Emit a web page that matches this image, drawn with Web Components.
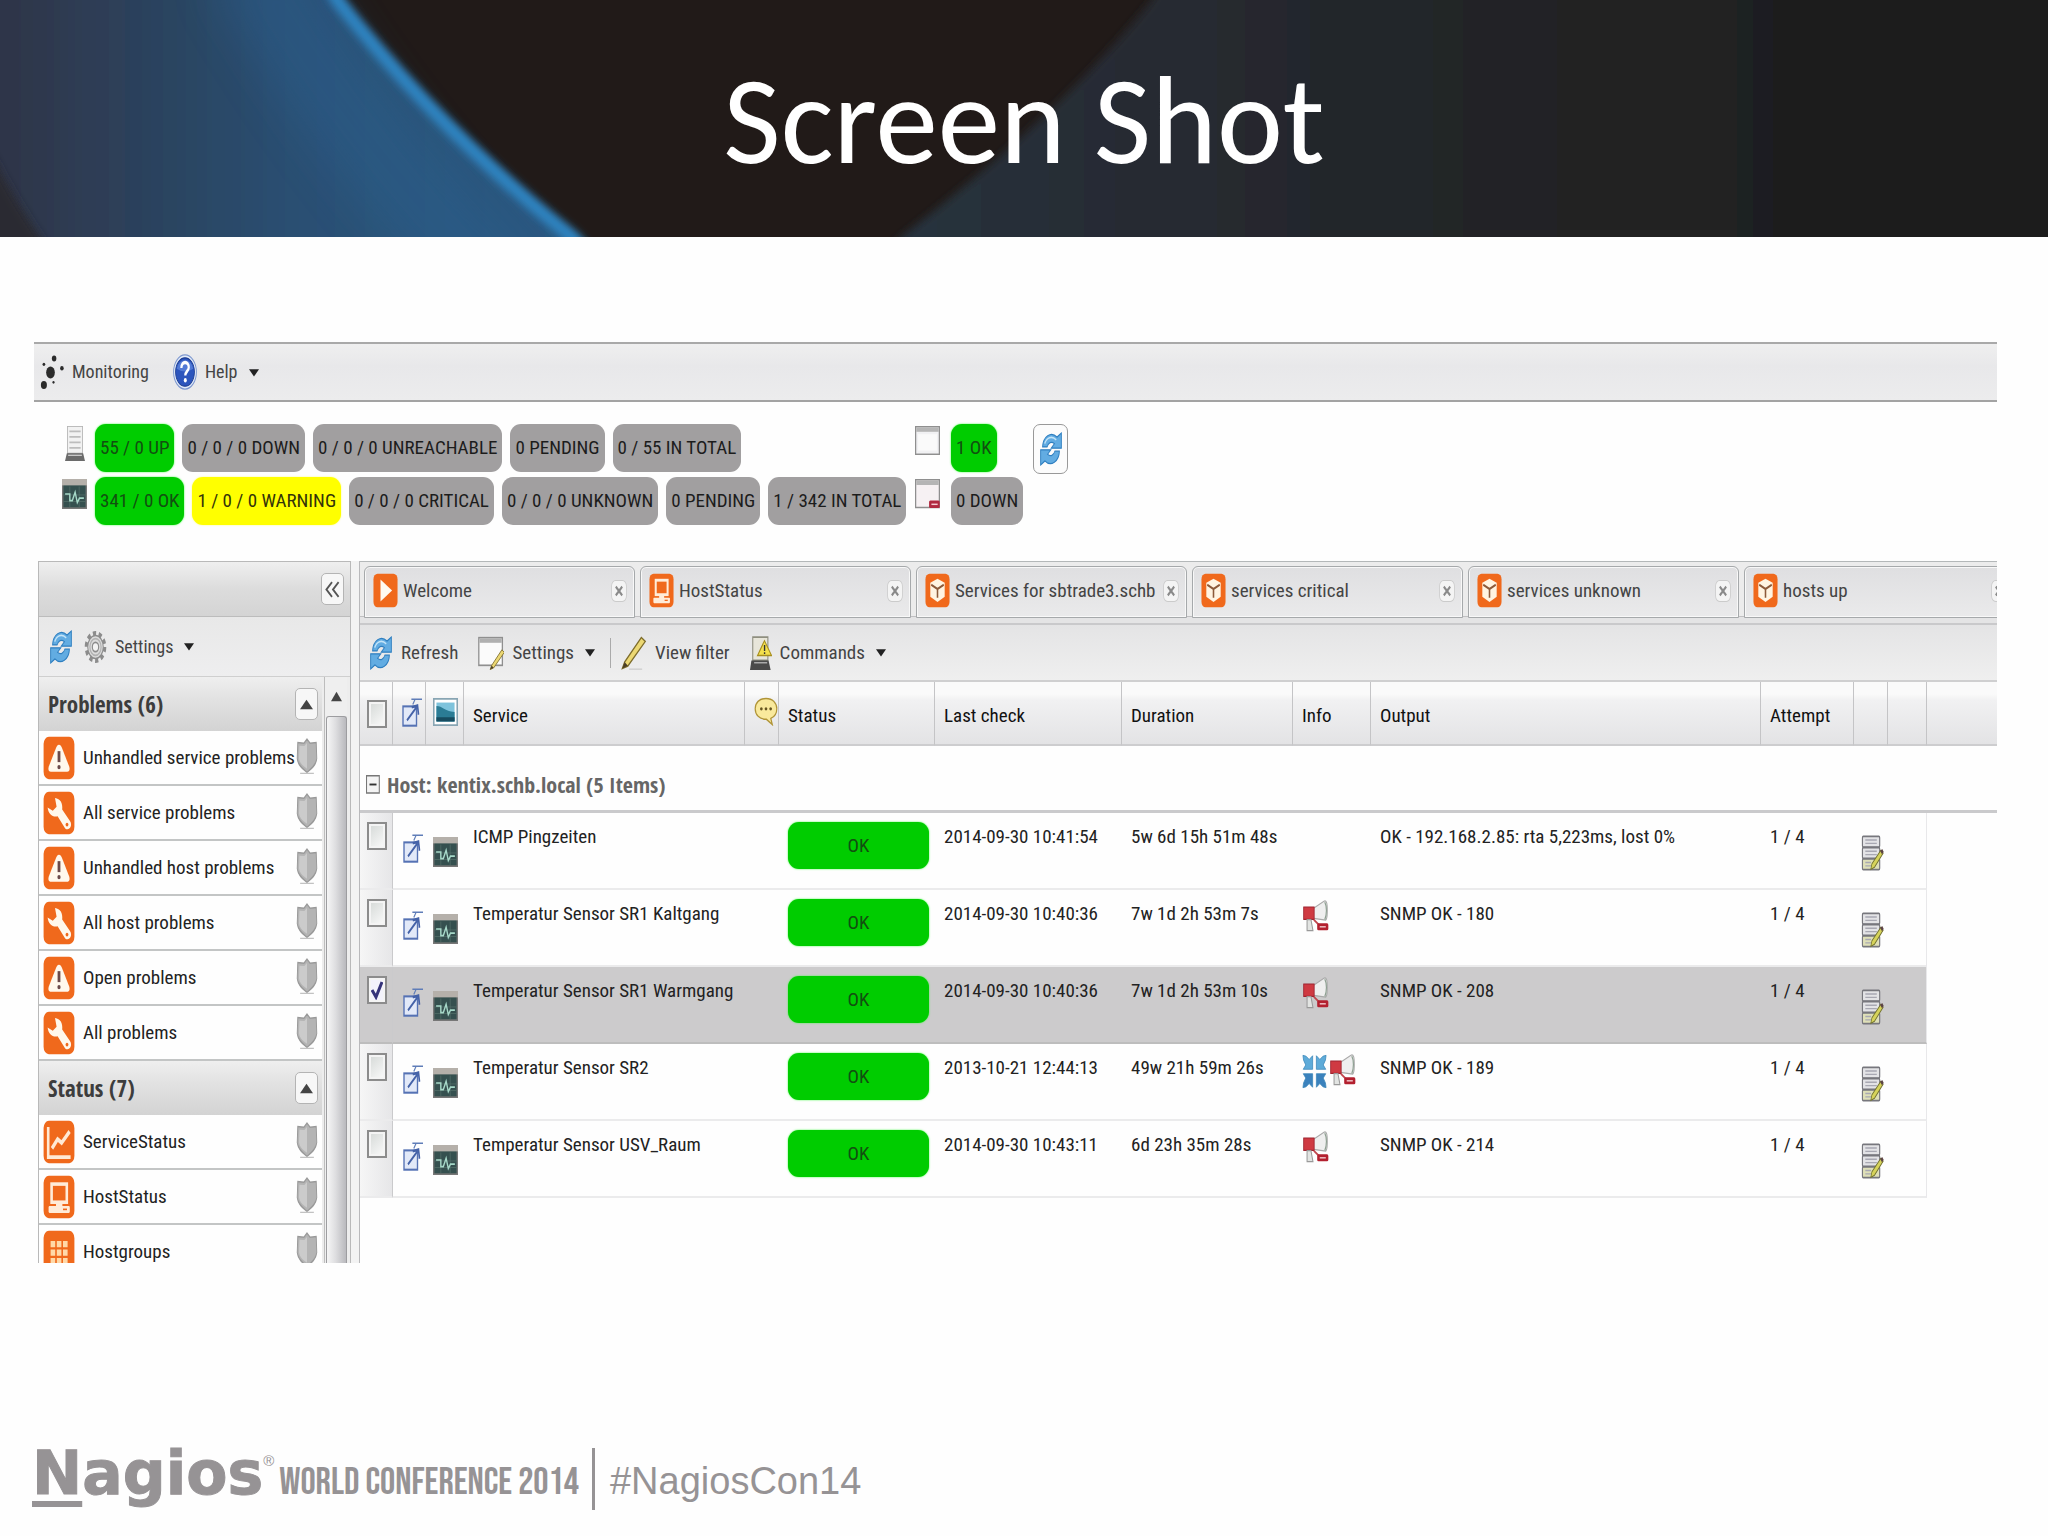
<!DOCTYPE html>
<html lang="en">
<head>
<meta charset="utf-8">
<title>Screen Shot</title>
<style>
  html, body { margin: 0; }
  body {
    min-height: 100vh; display: flex; flex-direction: column; background: #fefefe;
    font-family: "Roboto Condensed", "Liberation Sans", sans-serif; font-size: 19px; line-height: 24px; color: #222;
  }
  monitor-app { margin: 105px 51px 0 34px; }
  slide-footer { margin-top: auto; }
</style>
</head>
<body>
<slide-banner>Screen Shot</slide-banner>
<monitor-app></monitor-app>
<slide-footer></slide-footer>

<script>
const define = (name, html, init) => {
  const template = document.createElement('template');
  template.innerHTML = html;
  customElements.define(name, class extends HTMLElement {
    constructor() {
      super();
      this.attachShadow({ mode: 'open' }).append(template.content.cloneNode(true));
    }
    connectedCallback() { if (init) init(this, this.shadowRoot); }
  });
};

/* Icons: [width, height, drawing on a 16 x 16 grid] */
const tile = '<rect x=".3" y=".3" width="15.4" height="15.4" rx="2.6" fill="#f0691c"/>';
const screenIcon = '<rect x=".4" y=".4" width="15.2" height="15.2" fill="#35504f" stroke="#777"/><rect x="0" y="0" width="16" height="3.4" fill="#b5b0aa"/><path d="M1 8.5h14M1 12h14M5 4v11M11 4v11" stroke="#56716c" stroke-width=".4"/><path d="M2 8h3v3.5h1.6L8.4 7l1.4 5.6 1.4-2.4H14" fill="none" stroke="#a6d8c8" stroke-width=".9"/>';
const pencil = '<path d="M0 0L1.2-2.6 9.6-12.4 11.6-10.8 2.8-1z" fill="#ecd873" stroke="#7d6c2b" stroke-width=".6"/><path d="M0 0l1.2-2.6 1.6 1.5z" fill="#4b3f26"/>';
const ICONS = {
  network: [24, 36, '<g fill="#2b2b2b"><ellipse cx="7" cy="8.2" rx="2.9" ry="2.7"/><ellipse cx="2.600" cy="13.800" rx="2" ry="1.800"/><ellipse cx="9.400" cy="2" rx="1.500" ry="1.300"/><ellipse cx="14.600" cy="6.300" rx="1.200" ry="1"/><ellipse cx="2.600" cy="4.600" rx=".9" ry=".7"/><ellipse cx="9" cy="12.600" rx=".7" ry=".6"/></g>'],
  help: [24, 36, '<circle cx="8" cy="8" r="7.6" fill="#e4ecf8" stroke="#7d97cf" stroke-width=".6"/><circle cx="8" cy="8" r="6.3" fill="#2c55bd" stroke="#1c3c92" stroke-width=".5"/><path d="M2.5 6.5a5.6 4.6 0 0 1 11 0q-5.500 2.500-11 0z" fill="#6d93e4" opacity=".6"/><path d="M5.600 6.200c0-3.200 5-3.200 4.900-.2-.1 1.700-2.300 1.800-2.300 3.500" fill="none" stroke="#fff" stroke-width="1.500"/><circle cx="8.200" cy="11.700" r="1" fill="#fff"/>'],
  server: [20, 35, '<path d="M2 0h12v12.500H2z" fill="#f2f2f2" stroke="#aaa" stroke-width=".6"/><path d="M3.500 2.500h9M3.500 5h9M3.500 7.500h9M3.500 10h9" stroke="#bdbdbd" stroke-width=".8"/><path d="M1.500 12.500h13L16 16H0z" fill="#6b6b6b"/><path d="M2.500 13.400h11" stroke="#ccc" stroke-width=".6"/>'],
  screen: [25, 30, screenIcon],
  window: [25, 29, '<rect x=".4" y=".4" width="15.2" height="15.2" fill="#f1f1f3" stroke="#8f8f8f" stroke-width=".8"/><rect x=".8" y=".8" width="14.400" height="2.400" fill="#b5b5b5"/><rect x="2" y="4.500" width="12" height="9" fill="#fafafa"/>'],
  windowdown: [25, 30, '<rect x=".4" y=".4" width="15.2" height="14.800" fill="#f6f1f3" stroke="#8f8f8f" stroke-width=".8"/><rect x=".8" y=".8" width="14.400" height="2.400" fill="#b5b5b5"/><rect x="9" y="11.500" width="6.800" height="4" rx=".8" fill="#b02940"/><path d="M10.500 13.500h4" stroke="#f3c8d0" stroke-width=".8"/>'],
  refresh: [24, 34, '<g fill="#62ace2" stroke="#2f7fc0" stroke-width=".6"><path d="M2.400 7C2.600 2.200 8 -.6 12 2.400L14.900.5V7.600H8.200L10.300 5.500C8.300 4.200 6.200 5 5.400 7z"/><path d="M13.600 9C13.400 13.800 8 16.600 4 13.600L1.100 15.500V8.400H7.800L5.700 10.500C7.700 11.800 9.800 11 10.600 9z"/></g><path d="M3.800 5.500C5 2.600 8.500 1.500 11.500 3.700" fill="none" stroke="#c4e4f8" stroke-width=".8"/>'],
  gear: [23, 34, '<circle cx="8" cy="8" r="6.300" fill="none" stroke="#8c8c8c" stroke-width="2.400" stroke-dasharray="2.200 1.760"/><circle cx="8" cy="8" r="5.400" fill="#dcdcdc" stroke="#8c8c8c" stroke-width=".7"/><circle cx="8" cy="8" r="2.200" fill="#f3f3f3" stroke="#8c8c8c" stroke-width=".8"/><circle cx="8" cy="8" r="3.900" fill="none" stroke="#b2b2b2" stroke-width=".8"/>'],
  warn: [32, 44, tile + '<path d="M8 3.200c.8 0 1.100.5 1.500 1.200l3.600 6.700c.5 1.200 0 1.900-1 1.900H3.900c-1 0-1.500-.7-1-1.900l3.600-6.700C6.900 3.700 7.200 3.200 8 3.200z" fill="#fff8ec"/><path d="M8 5.500v4" stroke="#6b4a4a" stroke-width="1.400"/><circle cx="8" cy="11.300" r=".8" fill="#6b4a4a"/>'],
  wrench: [32, 44, tile + '<path d="M6 2.500c2.600.2 4 1.900 3.600 4.200l4.200 4.600c.9 1.800-1 3.300-2.700 2.300L7.300 9.200C5 9.700 2.700 8.500 2.300 6l2.600 1.200 1.900-1.500z" fill="#fff8ec"/><circle cx="12" cy="12.200" r=".7" fill="#f0691c"/>'],
  chart: [32, 44, tile + '<path d="M2.600 2.500v11h11.200" fill="none" stroke="#ffe9d4" stroke-width="1.300"/><path d="M4.500 10.300L7.300 7l2 1.300L13.300 4.200" fill="none" stroke="#ffe9d4" stroke-width="1.500"/>'],
  host: [32, 44, tile + '<rect x="4.300" y="3.300" width="7.600" height="6.600" fill="none" stroke="#ffecd9" stroke-width="1.300"/><path d="M6.500 10v1.600h3.200V10" fill="#ffecd9"/><rect x="2.800" y="11.300" width="10.600" height="2.500" rx=".5" fill="#ffecd9"/><path d="M10 12.500h2" stroke="#f0691c" stroke-width=".6"/>'],
  grid: [32, 44, tile + '<g fill="#ffd9a8"><path d="M3.800 4h2.300v2.300H3.800zM6.900 4h2.300v2.300H6.900zM10 4h2.300v2.300H10zM3.800 7.100h2.300v2.300H3.800zM6.900 7.100h2.300v2.300H6.900zM10 7.100h2.300v2.300H10zM3.800 10.200h2.300v2.300H3.800zM6.900 10.200h2.300v2.300H6.900zM10 10.200h2.300v2.300H10z"/></g>'],
  play: [25, 35, tile + '<path d="M4.800 3l7.400 5-7.400 5z" fill="#fffaf2"/>'],
  box: [25, 35, tile + '<path d="M8 2.600l4.600 1.900v6.300L8 13.200 3.400 10.800V4.500z" fill="#fff4e2"/><path d="M4 5.400L8 7.300l4-1.900M8 7.300v4" fill="none" stroke="#8c5a3a" stroke-width="1"/>'],
  shield: [22, 36, '<path d="M8 .5l2.200 1.800 4.500-.3.400 7.200C14.600 12.300 10.500 14 8 15.300 5.500 14 1.400 12.300.9 9.200L1.300 2l4.500.3z" fill="#b4b4b4" stroke="#999" stroke-width=".7"/><path d="M8 2.200v11.500C5.500 12.500 2.600 11.300 2.200 9l.3-5.600 3.600.1z" fill="#cbcbcb"/><path d="M3 15.700h10" stroke="#bbb" stroke-width=".5"/>'],
  link: [20, 30, '<rect x=".8" y="5" width="10.800" height="10.300" fill="#e2e9f8" stroke="#5572b4" stroke-width="1.100"/><path d="M4 12.500L11.500 5.500M7.800 5.500l4.600-1 .8 5" fill="none" stroke="#4462a8" stroke-width="1.300"/><path d="M7.500 1.200H16M10.500 1.200L8.600 4" fill="none" stroke="#5f7db8" stroke-width=".8"/>'],
  picture: [25, 28, '<rect x=".5" y=".5" width="15" height="15" fill="#fff" stroke="#88a5b3"/><rect x="2.200" y="2.600" width="11.600" height="10.800" fill="#7ec3dc"/><path d="M2.200 4.500c4 0 5 3 11.600 3.500v5.400H2.200z" fill="#2b7c95"/><path d="M2.200 11h11.600v2.400H2.200z" fill="#174c60"/>'],
  bubble: [24, 29, '<path d="M8 .8c4.500 0 7.200 2.500 7.200 5.700 0 2.600-1.600 4.500-4 5.300l1 3.400-3.900-2.900C3.500 12.300.8 9.800.8 6.500.8 3.200 3.500.8 8 .8z" fill="#f9e99c" stroke="#b09437" stroke-width=".8"/><g fill="#66551f"><circle cx="4.900" cy="6.500" r=".9"/><circle cx="8" cy="6.500" r=".9"/><circle cx="11.100" cy="6.500" r=".9"/></g>'],
  windowedit: [26, 34, '<rect x=".5" y=".8" width="14.500" height="13" fill="#fbfbfb" stroke="#8f8f8f" stroke-width=".8"/><rect x=".9" y="1.200" width="13.700" height="2" fill="#b0b0b0"/><g transform="translate(7.500 15.800) scale(.75)">' + pencil + '</g>'],
  pencil: [26, 34, '<g transform="translate(.8 15.300) scale(1.220 1.180)">' + pencil + '</g><path d="M5 15.600h8" stroke="#ccc" stroke-width=".6"/>'],
  command: [22, 34, '<path d="M2 .5h11v11H2z" fill="#e8e6da" stroke="#8f8f80" stroke-width=".8"/><path d="M1 11.500h12.500L15 16H0z" fill="#4a4a4a"/><path d="M3 12.600h9.500" stroke="#bbb" stroke-width=".6"/><path d="M10.500 2.200L15.700 9.200H5.500z" fill="#f4e04d" stroke="#a88f1e" stroke-width=".7"/><path d="M10.600 4.200v2.800M10.600 7.600v.9" stroke="#333" stroke-width="1"/>'],
  horn: [27, 33, '<path d="M6 4.500L13 .6c1.500-.6 2 .8 2 4.500s-.6 5.300-2 4.500L6 8.800z" fill="#efefef" stroke="#a9a9a9" stroke-width=".6"/><path d="M13.500 1c1.300 2 1.300 6 0 8.500" fill="none" stroke="#8ea092" stroke-width=".7"/><path d="M1 3.400h6.200v6H1z" fill="#cf3a42" stroke="#9e2430" stroke-width=".5"/><path d="M3 9.500v5.300h3.500L5.300 9.500z" fill="#e2e4e2" stroke="#999" stroke-width=".6"/><path d="M7 9.600l3 2.400" stroke="#c0474e" stroke-width="1"/><rect x="9" y="11.300" width="6.600" height="3.400" rx=".8" fill="#b3202f"/><path d="M10.500 13h3.600" stroke="#f0c5c9" stroke-width=".7"/>'],
  shrink: [25, 35, '<g fill="#5eabd9" stroke="#3a86b8" stroke-width=".4"><path d="M.6.6l2 .4 2 1.500L6.800.8V7H.8l1.600-2L1 2.800zM15.400.6l-2 .4-2 1.500L9.200.8V7h6l-1.600-2L15 2.800z"/><path d="M.6 15.400l2-.4 2-1.500 2.200 1.700V9H.8l1.600 2L1 13.200zM15.400 15.400l-2-.4-2-1.500-2.200 1.700V9h6l-1.600 2 1.400 2.200z" fill="#3b82bd"/></g>'],
  serveredit: [23, 36, '<g fill="#e3e3e6" stroke="#77777d" stroke-width=".8"><rect x="1" y=".6" width="12" height="4.800" rx=".6"/><rect x="1" y="5.600" width="12" height="4.800" rx=".6"/><rect x="1" y="10.600" width="12" height="4.800" rx=".6" fill="#dfe0b8"/></g><path d="M3 2.200h8M3 3.700h8M3 7.200h8M3 8.700h8M3 12.200h4M3 13.700h4" stroke="#a8a8b2" stroke-width=".6"/><path d="M6.800 15.300l.8-2.500 6.200-6 1.600 1.300-6 6.200z" fill="#d6d35a" stroke="#70702e" stroke-width=".5"/><path d="M13.300 7l1.500-.8 1 1.300-1.200 1.100z" fill="#5c4444"/>'],
  close: [16, 22, '<rect x=".6" y=".4" width="14.800" height="15.200" rx="4" fill="#f4f4f4" stroke="#cbcbcb" stroke-width=".8"/><path d="M4.800 4.800l6.400 6.400M11.200 4.800l-6.400 6.400" stroke="#8a8a8a" stroke-width="2"/>'],
  caret: [10, 9, '<path d="M0 2h16L8 15z" fill="#222"/>'],
  up: [13, 11, '<path d="M8 1l8 14H0z" fill="#444"/>'],
  rewind: [15, 17, '<path d="M7.500 1L1.500 8l6 7M14.500 1l-6 7 6 7" fill="none" stroke="#555" stroke-width="1.900"/>'],
  minus: [14, 19, '<path d="M.6.6h14.600v14.600H.6z" fill="#f4f4f4" stroke="#777" stroke-width="1.200"/><path d="M4 8h8" stroke="#333" stroke-width="1.600"/>']
};

define('ui-icon', `<style>:host { display: block; flex: none; } svg { display: block; }</style>`, (host, root) => {
  const [w, h, art] = ICONS[host.getAttribute('name')];
  const width = host.getAttribute('w') || w, height = host.getAttribute('h') || h;
  const box = document.createElement('div');
  box.innerHTML = `<svg width="${width}" height="${height}" viewBox="0 0 16 16" preserveAspectRatio="none" aria-hidden="true">${art}</svg>`;
  root.append(box.firstChild);
});

define('slide-banner', `
<style>
  :host { display: grid; height: 237px; overflow: hidden; background: #211a18; }
  svg, h1 { grid-area: 1 / 1; width: 100%; }
  svg { height: 237px; display: block; }
  h1 { margin: 0; padding-top: 4px; align-self: center; z-index: 1; text-align: center; color: #fff; font: 400 125px/150px Carlito, Lato, sans-serif; }
</style>
<svg viewBox="0 0 2048 237" preserveAspectRatio="none" aria-hidden="true">
  <defs>
    <linearGradient id="left" x1="0" x2="1"><stop offset="0" stop-color="#2d3142"/><stop offset=".2" stop-color="#2d3d55"/><stop offset=".5" stop-color="#2b4f72"/><stop offset="1" stop-color="#2b5a84"/></linearGradient>
    <linearGradient id="right" x1="0" x2="1"><stop offset="0" stop-color="#25333f"/><stop offset=".25" stop-color="#262a31"/><stop offset=".6" stop-color="#212223"/><stop offset="1" stop-color="#1c1a19"/></linearGradient>
    <filter id="soft" x="-10%" y="-30%" width="120%" height="160%"><feGaussianBlur stdDeviation="4"/></filter>
    <filter id="haze" x="-50%" y="-50%" width="200%" height="200%"><feGaussianBlur stdDeviation="22"/></filter>
  </defs>
  <path d="M1170-40L1152 0Q1060 115 901 237L860 280H2100V-40z" fill="url(#right)" filter="url(#soft)"/>
  <path d="M-40-40H325L343 0Q445 130 578 237L620 280H-40z" fill="url(#left)" filter="url(#soft)"/>
  <path d="M250-40Q350 140 510 300" fill="none" stroke="#2c6090" stroke-width="90" opacity=".4" filter="url(#haze)"/>
  <path d="M318-40L337 0Q438 130 572 237L610 280" fill="none" stroke="#2f86c4" stroke-width="13" filter="url(#soft)"/>
  <path d="M-30 110Q10 200 64 270H-30z" fill="#2a2a31" filter="url(#soft)"/>
</svg>
<h1><slot></slot></h1>`);

define('status-badge', `
<style>
  :host { display: block; box-sizing: border-box; height: 48px; padding: 0 5px; border-radius: 11px; background: #a19fa0; color: #1c1c1c; line-height: 48px; white-space: nowrap; text-align: center; }
  :host([tone=ok]) { background: #00cc00; color: #124f10; box-shadow: 0 0 2px #3dfc3d; }
  :host([tone=warning]) { background: #ffff00; color: #33330a; box-shadow: 0 0 2px #ffff70; }
  :host([wide]) { height: 47px; line-height: 47px; }
</style><slot></slot>`);

define('tool-button', `
<style>
  :host { display: block; flex: none; }
  button { display: flex; align-items: center; gap: 8px; margin: 0; padding: 0; border: 0; background: none; font: inherit; color: #444; white-space: nowrap; }
  .menu { margin-left: 3px; }
</style>
<button type="button"><slot></slot></button>`, (host, root) => {
  const button = root.querySelector('button');
  if (host.hasAttribute('icon')) {
    const icon = document.createElement('ui-icon');
    icon.setAttribute('name', host.getAttribute('icon'));
    button.prepend(icon);
  }
  if (host.hasAttribute('menu')) button.insertAdjacentHTML('beforeend', '<ui-icon class="menu" name="caret"></ui-icon>');
  if (host.hasAttribute('label')) button.setAttribute('aria-label', host.getAttribute('label'));
});

define('small-button', `
<style>
  :host { display: block; flex: none; }
  button { display: flex; align-items: center; justify-content: center; width: 23px; height: 32px; margin: 0; padding: 0; border: 1px solid #b4b4b4; border-radius: 5px; background: #f7f7f7; }
  :host([large]) button { width: 35px; height: 50px; border-color: #999; border-radius: 7px; background: #fcfcfc; }
</style>
<button type="button"><slot></slot></button>`, (host, root) => {
  root.querySelector('button').setAttribute('aria-label', host.getAttribute('label'));
});

define('app-menubar', `
<style>
  :host { display: flex; align-items: center; gap: 24px; box-sizing: border-box; height: 60px; padding-left: 6px; border-top: 2px solid #a9a9a9; border-bottom: 2px solid #a3a3a3; background: linear-gradient(#efefef, #e8e8ea 40%, #ececed); font-size: 18px; }
</style>
<tool-button icon="network">Monitoring</tool-button>
<tool-button icon="help" menu>Help</tool-button>`);

define('status-summary', `
<style>
  :host { display: flex; align-items: flex-start; padding: 22px 0 0 28px; height: 137px; font-size: 19px; }
  section { display: flex; flex-direction: column; gap: 5px; flex: none; }
  .hosts { width: 853px; }
  .row { display: flex; gap: 8px; }
  .mark { width: 25px; height: 40px; display: flex; justify-content: center; }
  ui-icon { padding-top: 2px; }
  small-button ui-icon { padding-top: 0; }
  .cluster { margin-right: 32px; width: 86px; }
  .cluster .row { gap: 11px; }
</style>
<section class="hosts">
  <div class="row"><div class="mark"><ui-icon name="server"></ui-icon></div>
    <status-badge tone="ok">55 / 0 UP</status-badge><status-badge>0 / 0 / 0 DOWN</status-badge><status-badge>0 / 0 / 0 UNREACHABLE</status-badge><status-badge>0 PENDING</status-badge><status-badge>0 / 55 IN TOTAL</status-badge></div>
  <div class="row"><div class="mark"><ui-icon name="screen"></ui-icon></div>
    <status-badge tone="ok">341 / 0 OK</status-badge><status-badge tone="warning">1 / 0 / 0 WARNING</status-badge><status-badge>0 / 0 / 0 CRITICAL</status-badge><status-badge>0 / 0 / 0 UNKNOWN</status-badge><status-badge>0 PENDING</status-badge><status-badge>1 / 342 IN TOTAL</status-badge></div>
</section>
<section class="cluster">
  <div class="row"><div class="mark"><ui-icon name="window"></ui-icon></div><status-badge tone="ok">1 OK</status-badge></div>
  <div class="row"><div class="mark"><ui-icon name="windowdown"></ui-icon></div><status-badge>0 DOWN</status-badge></div>
</section>
<small-button large label="Refresh status"><ui-icon name="refresh"></ui-icon></small-button>`);

define('nav-group', `
<style>
  :host { display: block; }
  header { display: flex; align-items: center; justify-content: space-between; box-sizing: border-box; height: 54px; padding: 0 4px 0 9px; background: linear-gradient(#efefef, #e2e2e2 40%, #d3d3d3); }
  h2 { margin: 0; font: 700 23px/28px "Open Sans Condensed", "Roboto Condensed", sans-serif; color: #3d3d3d; }
</style>
<header><h2></h2><small-button label="Collapse group"><ui-icon name="up"></ui-icon></small-button></header>
<nav><slot></slot></nav>`, (host, root) => {
  root.querySelector('h2').textContent = host.getAttribute('heading');
  root.querySelector('nav').setAttribute('aria-label', host.getAttribute('heading'));
});

define('nav-item', `
<style>
  :host { display: block; }
  a { display: flex; align-items: center; box-sizing: border-box; height: 55px; padding: 0 4px 0 4px; border-bottom: 2px solid #c3c5c5; background: #fefefe; color: #222; text-decoration: none; white-space: nowrap; }
  span { flex: 1 1 0; min-width: 0; margin-left: 8px; }
  .shield { padding-bottom: 4px; }
</style>
<a href="#"><span><slot></slot></span><ui-icon class="shield" name="shield"></ui-icon></a>`, (host, root) => {
  const icon = document.createElement('ui-icon');
  icon.setAttribute('name', host.getAttribute('icon'));
  root.querySelector('a').prepend(icon);
});

define('side-panel', `
<style>
  :host { display: flex; flex-direction: column; box-sizing: border-box; width: 313px; flex: none; overflow: hidden; border: solid #b9b9b9; border-width: 1px 1px 0 1px; background: #ededed; }
  .title { display: flex; align-items: center; justify-content: flex-end; box-sizing: border-box; flex: none; height: 55px; padding-right: 6px; background: linear-gradient(#efefef, #dcdcdc 50%, #d4d4d4); border-bottom: 1px solid #bcbcbc; }
  .tools { display: flex; align-items: center; gap: 11px; box-sizing: border-box; flex: none; height: 60px; padding-left: 10px; background: linear-gradient(#e8e8e8, #eeeeef); border-bottom: 1px solid #cfcfcf; font-size: 18px; }
  .body { display: flex; flex: 1 1 0; min-height: 0; }
  .list { flex: 1 1 0; min-width: 0; overflow: hidden; }
  .scroll { display: flex; flex-direction: column; align-items: center; width: 22px; flex: none; margin: 0 3px 0 2px; border-left: 1px solid #bdbdbd; background: #efefef; }
  .scroll ui-icon { padding: 14px 0; }
  .thumb { flex: 1; align-self: stretch; margin-left: 1px; border: 1px solid #9d9da0; border-bottom: 0; border-radius: 3px 3px 0 0; background: linear-gradient(90deg, #f6f6f6, #dedee0 45%, #b9b9bd); }
</style>
<div class="title"><small-button label="Collapse"><ui-icon name="rewind"></ui-icon></small-button></div>
<div class="tools"><tool-button icon="refresh" label="Reload menu"></tool-button><tool-button icon="gear" menu>Settings</tool-button></div>
<div class="body">
  <div class="list">
    <nav-group heading="Problems (6)">
      <nav-item icon="warn">Unhandled service problems</nav-item>
      <nav-item icon="wrench">All service problems</nav-item>
      <nav-item icon="warn">Unhandled host problems</nav-item>
      <nav-item icon="wrench">All host problems</nav-item>
      <nav-item icon="warn">Open problems</nav-item>
      <nav-item icon="wrench">All problems</nav-item>
    </nav-group>
    <nav-group heading="Status (7)">
      <nav-item icon="chart">ServiceStatus</nav-item>
      <nav-item icon="host">HostStatus</nav-item>
      <nav-item icon="grid">Hostgroups</nav-item>
    </nav-group>
  </div>
  <div class="scroll"><ui-icon name="up" w="11" h="11"></ui-icon><div class="thumb"></div></div>
</div>`);

define('tab-item', `
<style>
  :host { display: flex; align-items: center; box-sizing: border-box; flex: none; width: 271px; height: 52px; padding: 0 7px 3px 8px; border: 1px solid #a6a9ab; border-radius: 6px 6px 0 0; background: linear-gradient(#dfdfe1, #eaeaeb); box-shadow: inset 0 0 0 1px #f8f8f8; }
  .tab { display: flex; align-items: center; gap: 5px; flex: 1 1 0; min-width: 0; }
  button { margin: 0; padding: 0; border: 0; background: none; font: inherit; color: #444; text-align: left; }
  span { overflow: hidden; white-space: nowrap; }
</style>
<button type="button" class="tab"><span><slot></slot></span></button>
<button type="button" aria-label="Close tab"><ui-icon name="close"></ui-icon></button>`, (host, root) => {
  root.querySelector('.tab').insertAdjacentHTML('afterbegin', `<ui-icon name="${host.getAttribute('icon')}" w="25" h="35"></ui-icon>`);
});

define('tab-strip', `
<style>
  :host { display: flex; gap: 5px; box-sizing: border-box; height: 64px; padding: 4px 0 0 4px; overflow: hidden; border-top: 1px solid #b4b8b9; border-bottom: 2px solid #c9c9cb; background: linear-gradient(#ececec 54px, #c0c0c2 54px, #c0c0c2 55px, #e4e4e5 55px); }
</style><slot></slot>`);

define('main-toolbar', `
<style>
  :host { display: flex; align-items: center; box-sizing: border-box; height: 57px; padding: 0 9px; border-bottom: 2px solid #cfcfd0; background: linear-gradient(#e4e4e5, #efefef); font-size: 19px; }
  tool-button { margin-right: 20px; }
  i { width: 1px; height: 30px; margin: 0 10px 0 -5px; background: #aaa; }
</style>
<tool-button icon="refresh">Refresh</tool-button>
<tool-button icon="windowedit" menu>Settings</tool-button>
<i></i>
<tool-button icon="pencil">View filter</tool-button>
<tool-button icon="command" menu>Commands</tool-button>`);

const SERVICES = [
  ['ICMP Pingzeiten', '2014-09-30 10:41:54', '5w 6d 15h 51m 48s', [], 'OK - 192.168.2.85: rta 5,223ms, lost 0%'],
  ['Temperatur Sensor SR1 Kaltgang', '2014-09-30 10:40:36', '7w 1d 2h 53m 7s', ['horn'], 'SNMP OK - 180'],
  ['Temperatur Sensor SR1 Warmgang', '2014-09-30 10:40:36', '7w 1d 2h 53m 10s', ['horn'], 'SNMP OK - 208', true],
  ['Temperatur Sensor SR2', '2013-10-21 12:44:13', '49w 21h 59m 26s', ['shrink', 'horn'], 'SNMP OK - 189'],
  ['Temperatur Sensor USV_Raum', '2014-09-30 10:43:11', '6d 23h 35m 28s', ['horn'], 'SNMP OK - 214']
];

define('service-grid', `
<style>
  :host { display: block; }
  table { width: 100%; table-layout: fixed; border-collapse: separate; border-spacing: 0; }
  th, td { box-sizing: border-box; padding: 0 0 0 9px; text-align: left; font-weight: 400; white-space: nowrap; }
  thead th { height: 64px; padding-top: 6px; border-right: 1px solid #c4c4c6; border-bottom: 2px solid #cdcdcf; background: linear-gradient(#fafafa 12px, #f1f1f2 18px, #e3e3e5); color: #111; vertical-align: middle; }
  thead th:last-child { border-right: 0; }
  thead ui-icon { margin-bottom: 9px; }
  thead input { margin-bottom: 4px; }
  .tight { padding-left: 7px; }
  .group th { height: 67px; padding: 12px 0 0 6px; border-bottom: 3px solid #cacacc; }
  .group button { display: flex; align-items: center; gap: 7px; margin: 0; padding: 0; border: 0; background: none; color: #666; font: 700 22px/28px "Open Sans Condensed", "Roboto Condensed", sans-serif; }
  tbody td { height: 77px; padding-top: 12px; border-bottom: 2px solid #ebebec; vertical-align: top; }
  tbody td:nth-child(13) { border-right: 1px solid #e8e8ea; }
  tbody td:last-child { border-bottom: 0; }
  tbody td:first-child { padding-top: 9px; border-right: 1px solid #cacacc; background: linear-gradient(90deg, #f6f6f6, #e6e6e8); }
  tr.on td:not(:last-child) { background: #cccbcc; border-bottom-color: #bdbdbd; }
  tbody td.link { padding: 20px 0 0 10px; }
  tbody td.kind { padding: 24px 0 0 7px; }
  tbody td.state { padding: 9px 6px 0 9px; }
  tbody td.info { padding-top: 10px; }
  .info div { display: flex; gap: 2px; }
  tbody td.edit { padding: 22px 0 0 7px; }
  input { appearance: none; display: block; box-sizing: border-box; width: 20px; height: 28px; margin: 0; border: 2px solid #8c8c8c; background: linear-gradient(135deg, #d4d8d6, #fbfbfb); box-shadow: inset 0 0 0 2px #f4f4f4; }
  input:checked { background: #f3f2fb url('data:image/svg+xml,<svg xmlns="http://www.w3.org/2000/svg" viewBox="0 0 16 24" preserveAspectRatio="none"><path d="M3 12l4 7L13 4" fill="none" stroke="%2335327a" stroke-width="3"/></svg>') center / 100% 100% no-repeat; }
</style>
<table>
  <colgroup><col width="33"><col width="33"><col width="38"><col width="281"><col width="34"><col width="156"><col width="187"><col width="171"><col width="78"><col><col width="93"><col width="34"><col width="39"><col width="70"></colgroup>
  <thead><tr>
    <th class="tight"><input type="checkbox" aria-label="Select all services"></th>
    <th><ui-icon name="link"></ui-icon></th><th class="tight"><ui-icon name="picture"></ui-icon></th>
    <th>Service</th><th><ui-icon name="bubble"></ui-icon></th><th>Status</th><th>Last check</th><th>Duration</th><th>Info</th><th>Output</th><th>Attempt</th><th></th><th></th><th></th>
  </tr></thead>
  <tbody>
    <tr class="group"><th colspan="14"><button type="button"><ui-icon name="minus"></ui-icon>Host: kentix.schb.local (5 Items)</button></th></tr>
  </tbody>
</table>`, (host, root) => {
  root.querySelector('tbody').insertAdjacentHTML('beforeend', SERVICES.map(([name, check, duration, info, output, on]) => `
    <tr${on ? ' class="on"' : ''}>
      <td class="tight"><input type="checkbox" aria-label="Select ${name}"${on ? ' checked' : ''}></td>
      <td class="link"><ui-icon name="link"></ui-icon></td><td class="kind"><ui-icon name="screen"></ui-icon></td>
      <td>${name}</td><td></td><td class="state"><status-badge tone="ok" wide>OK</status-badge></td>
      <td>${check}</td><td>${duration}</td>
      <td class="info"><div>${info.map(i => `<ui-icon name="${i}"></ui-icon>`).join('')}</div></td>
      <td>${output}</td><td>1 / 4</td><td class="edit"><ui-icon name="serveredit"></ui-icon></td><td></td><td></td>
    </tr>`).join(''));
});

define('main-panel', `
<style>:host { display: block; flex: 1 1 0; min-width: 0; overflow: hidden; border-left: 1px solid #b9b9bb; }</style>
<tab-strip>
  <tab-item icon="play">Welcome</tab-item><tab-item icon="host">HostStatus</tab-item><tab-item icon="box">Services for sbtrade3.schb</tab-item><tab-item icon="box">services critical</tab-item><tab-item icon="box">services unknown</tab-item><tab-item icon="box">hosts up</tab-item>
</tab-strip>
<main-toolbar></main-toolbar>
<service-grid></service-grid>`);

define('monitor-app', `
<style>
  :host { display: block; }
  main { display: flex; gap: 8px; height: 702px; padding-left: 4px; background: linear-gradient(90deg, #fefefe 4px, #f3f3f3 4px, #f3f3f3 325px, #fefefe 325px); }
</style>
<app-menubar></app-menubar>
<status-summary></status-summary>
<main><side-panel></side-panel><main-panel></main-panel></main>`);

define('slide-footer', `
<style>
  :host { display: block; color: #969395; }
  footer { display: flex; align-items: baseline; height: 64px; padding: 0 32px 24px; white-space: nowrap; }
  .brand { font: 700 60px/50px "DejaVu Sans", sans-serif; -webkit-text-stroke: 1px #969395; }
  .brand span { text-decoration: underline 6px; text-underline-offset: 7px; text-decoration-skip-ink: none; }
  sup { align-self: flex-start; margin-top: 5px; font: 400 15px/16px "Liberation Sans", sans-serif; }
  .event { margin-left: 5px; font: 400 38px/40px "Bebas Neue", "Roboto Condensed", sans-serif; }
  i { align-self: flex-start; width: 3px; height: 62px; margin: 0 15px 0 13px; background: #969395; }
  a { font: 400 38px/40px "Liberation Sans", sans-serif; color: inherit; text-decoration: none; }
</style>
<footer><div class="brand"><span>N</span>agios</div><sup>®</sup><div class="event">WORLD CONFERENCE 2014</div><i></i><a href="#">#NagiosCon14</a></footer>`);
</script>
</body>
</html>
